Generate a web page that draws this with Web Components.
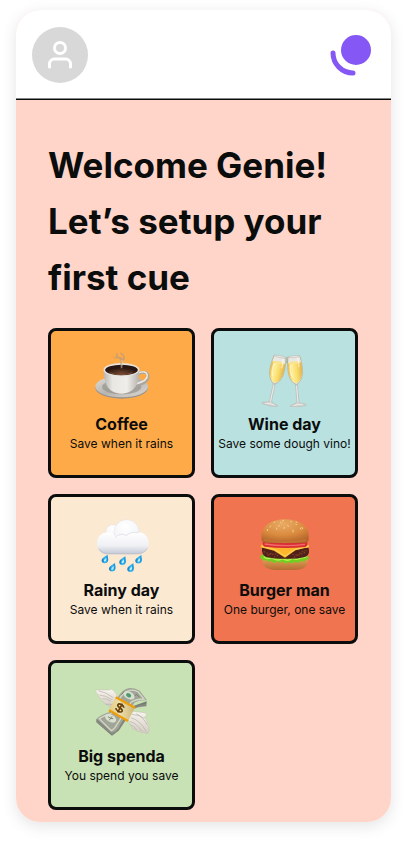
<!DOCTYPE html>
<html lang="en">
<head>
<meta charset="utf-8">
<meta name="viewport" content="width=device-width, initial-scale=1">
<title>Set up your first cue</title>
<style>
body { margin: 0; background: #fff; color: #0b0c0c; font-family: Inter, "Liberation Sans", sans-serif; }
</style>
</head>
<body>
<cue-screen>
  <cue-header slot="header"></cue-header>
  <h1 slot="title">Welcome Genie! Let’s setup your first cue</h1>
  <cue-card style="--fill:#ffaa48" icon="coffee"><span slot="name">Coffee</span><span slot="note">Save when it rains</span></cue-card>
  <cue-card style="--fill:#b9e1e0" icon="wine"><span slot="name">Wine day</span><span slot="note">Save some dough vino!</span></cue-card>
  <cue-card style="--fill:#fbe9d2" icon="rain"><span slot="name">Rainy day</span><span slot="note">Save when it rains</span></cue-card>
  <cue-card style="--fill:#f0744f" icon="burger"><span slot="name">Burger man</span><span slot="note">One burger, one save</span></cue-card>
  <cue-card style="--fill:#c9e2b5" icon="money"><span slot="name">Big spenda</span><span slot="note">You spend you save</span></cue-card>
</cue-screen>

<script>
const art = {
coffee: ['142 75 168 168', `
<defs>
<linearGradient id="cup" x1="0" x2="1"><stop offset="0" stop-color="#b9b7b2"/><stop offset=".25" stop-color="#e9e7e2"/><stop offset=".65" stop-color="#f0eeea"/><stop offset="1" stop-color="#b5b2ac"/></linearGradient>
<linearGradient id="dish" x1="0" x2="1" y2="1"><stop offset="0" stop-color="#e2dfd9"/><stop offset=".5" stop-color="#b8b5b0"/><stop offset="1" stop-color="#dddad5"/></linearGradient>
<radialGradient id="brew" cy=".8"><stop offset="0" stop-color="#74482f"/><stop offset="1" stop-color="#2a1713"/></radialGradient>
</defs>
<ellipse cx="225" cy="186" rx="79" ry="32" fill="#96928c"/>
<ellipse cx="225" cy="182" rx="79" ry="32" fill="url(#dish)"/>
<ellipse cx="225" cy="183" rx="59" ry="22" fill="#94908b" opacity=".65"/>
<path d="M274 143q26-10 30 5c3 16-15 26-38 31" fill="none" stroke="#aaa69f" stroke-width="8"/>
<path d="M274 141q25-9 28 6c2 14-15 22-35 27" fill="none" stroke="#eeece8" stroke-width="4"/>
<path d="M171 131c0 43 14 70 53 72 40-2 54-29 54-72z" fill="url(#cup)"/>
<ellipse cx="224.500" cy="131" rx="54" ry="20" fill="#e9e5df"/>
<ellipse cx="224.500" cy="132" rx="49" ry="16" fill="url(#brew)"/>
<path d="M190 140q32 13 67 0" fill="none" stroke="#9b6a4c" stroke-width="3" opacity=".5"/>
<path d="M224 119c-5-9 8-14-5-22-8-5-13-9-6-15m11 24c14-7 9-20-3-25m-18 15q16-7 29 7" fill="none" stroke="#b89a78" stroke-width="5" opacity=".65"/>
<path d="M225 127c-3-10 8-15 0-25" fill="none" stroke="#e4d5c4" stroke-width="5" opacity=".5"/>`],
wine: ['145 75 168 168', `
<defs><linearGradient id="gold" x1="0" x2="1"><stop offset="0" stop-color="#e6b84a"/><stop offset=".3" stop-color="#ffee93"/><stop offset=".65" stop-color="#f8da68"/><stop offset="1" stop-color="#dfb352"/></linearGradient>
<g id="flute">
<path d="M-3 81L-3 135Q-5 142-21 144Q-27 146-22 149Q0 153 22 149Q27 146 21 144Q5 142 3 135L3 81z" fill="#d3d2cf" stroke="#a4a19b"/>
<path d="M0 88v48m-14 10q14-4 28 0" fill="none" stroke="#f6f6f4" stroke-width="2"/>
<path d="M-18 0C-25 38-24 73 0 84C24 73 25 38 18 0z" fill="#e8e9e5" stroke="#b3a888" stroke-width="2"/>
<path d="M-20 18C-24 46-20 72 0 80C20 72 24 46 20 18z" fill="url(#gold)"/>
<ellipse cy="18" rx="19" ry="4" fill="#f8e394"/>
<ellipse rx="18" ry="3" fill="#e8e4df" stroke="#aaa69f"/>
<path d="M-12 22Q-17 46-10 62" fill="none" stroke="#fff8ce" stroke-width="5" opacity=".8"/>
<path d="M10 5q4 14 2 28" stroke="#fff" stroke-width="3" fill="none" opacity=".7"/>
</g></defs>
<g transform="translate(214 92) rotate(12)"><use href="#flute"/></g>
<g transform="translate(256 92) rotate(-5)"><use href="#flute"/></g>
<path d="M234 92l-1 20 4 0-1-20z" fill="#98866b" opacity=".6"/>`],
rain: ['142 75 168 168', `
<defs><radialGradient id="cloud" cx=".45" cy=".25" r=".75"><stop offset="0" stop-color="#fff"/><stop offset=".65" stop-color="#f5f6f9"/><stop offset="1" stop-color="#dde0e8"/></radialGradient>
<linearGradient id="base" x2="0" y2="1"><stop offset="0" stop-color="#fff"/><stop offset=".6" stop-color="#f0f1f5"/><stop offset="1" stop-color="#c3c8d4"/></linearGradient>
<linearGradient id="water" x1="0" x2="1"><stop offset="0" stop-color="#1471b8"/><stop offset=".5" stop-color="#35baf3"/><stop offset="1" stop-color="#178bd0"/></linearGradient>
<g id="drop"><path d="M8-14C-2-8-11-3-10 5C-8 14 6 14 9 5C11-1 8-7 8-14z" fill="url(#water)"/><path d="M4-5C-2 0-4 3-3 6q5 2 7-4z" fill="#b7f2ff"/></g></defs>
<circle cx="199" cy="120" r="22" fill="url(#cloud)" stroke="#d9dce5"/>
<circle cx="240" cy="121" r="38" fill="url(#cloud)" stroke="#d9dce5"/>
<path d="M180 121c-18 2-29 15-29 34 0 21 15 32 34 32h87c20 0 34-13 34-34 0-18-12-30-28-32-14-3-30 1-38 10-12-7-29-5-33 4-5-9-13-15-27-14z" fill="url(#base)"/>
<path d="M207 138c4-11 21-15 33-6m0-2c9-8 24-11 37-7" fill="none" stroke="#d5d8e1" stroke-width="2"/>
<path d="M157 171q10 14 30 14h84q22 0 31-16" fill="none" stroke="#b5bac8" stroke-width="3" opacity=".6"/>
<use href="#drop" x="175" y="202"/><use href="#drop" x="228" y="207"/><use href="#drop" x="276" y="203"/><use href="#drop" x="197" y="227"/><use href="#drop" x="252" y="228"/>`],
burger: ['145 75 168 168', `
<defs><radialGradient id="bun" cx=".45" cy=".2" r=".8"><stop offset="0" stop-color="#e9ab64"/><stop offset=".6" stop-color="#d98a3e"/><stop offset="1" stop-color="#b5652b"/></radialGradient>
<linearGradient id="heel" x2="0" y2="1"><stop offset="0" stop-color="#e5a45b"/><stop offset="1" stop-color="#b66c32"/></linearGradient></defs>
<path d="M161 196h137c4 27-13 38-40 38h-58c-27 0-42-13-39-38z" fill="url(#heel)"/>
<path d="M158 188q-8 11 2 13 5 8 13 2 7 10 15 3 8 12 19 2 8 8 16 1 10 10 19 1 9 9 18-1 10 7 16-2 10 5 15-4 11 2 10-9z" fill="#72ce20"/>
<path d="M165 194q12 9 23 3 18 12 34 3 16 10 30-1 13 7 25-2 11 2 18-5" fill="none" stroke="#baf052" stroke-width="4"/>
<path d="M160 168h140q5 25-14 28-29 6-56 4-32 2-58-5-14-7-12-27z" fill="#4f2119"/>
<path d="M165 178q22 14 41 6m45 3q24 6 44-11M177 190l11-6m68 12l13-8m-73 7l16-6m60-5l18-9" fill="none" stroke="#84432b" stroke-width="4" stroke-dasharray="4 5"/>
<path d="M163 157h132q7 1 6 8l-41 10-31 22-33-21-40-10q-1-8 7-9z" fill="#ffb52c"/>
<path d="M160 163l39 10 30 19 29-19 42-11" fill="none" stroke="#ffcf4d" stroke-width="4"/>
<path d="M164 147h130q7 14-4 18-62 6-122-1-10-5-4-17z" fill="#d72f36"/>
<path d="M168 156q61 9 121 1" fill="none" stroke="#f56a66" stroke-width="4"/>
<path d="M159 144c-5-44 29-62 70-62s77 18 71 62c-2 10-18 9-27 9h-88c-13 0-25 0-26-9z" fill="url(#bun)"/>
<path d="M165 144q64 14 127 0" fill="none" stroke="#c97c38" stroke-width="5" opacity=".65"/>
<g stroke="#f6cf91" stroke-width="3" stroke-linecap="round"><path d="M196 92l3-3m22-2l4-2m21 3l3 2M184 105l2-3m23 1l3-2m25-1l2 3m22-7l3 2M177 112l-1 4m27-8l2 4m22-6l-1 4m27 4v6m22-12l2 4M215 90l3 3m45-4l2 3m15 14l2 4"/></g>`],
money: ['142 75 168 168', `
<defs><linearGradient id="wing" x2="0" y2="1"><stop offset="0" stop-color="#f8f5ef"/><stop offset="1" stop-color="#d2cbc1"/></linearGradient>
<linearGradient id="band" x1="0" x2="1"><stop offset="0" stop-color="#e5c978"/><stop offset=".4" stop-color="#ecdfae"/><stop offset="1" stop-color="#cdb676"/></linearGradient></defs>
<path d="M148 95q-2 10 7 15-1 8 7 10 0 8 8 11 2 9 12 9 6 9 18 8l13-31q-5-15-18-23-8 3-17 2-10 0-30-1z" fill="url(#wing)" stroke="#b6afa5"/>
<path d="M155 98q22 4 45 21m-41-8q16 1 38 14m-29-3q13-1 25 8m-15 9q12-2 20 2" fill="none" stroke="#b5aea6" stroke-width="2"/>
<path d="M248 163q6-5 20-2l25 3q9 3 6 9-2 5-7 5 10 5 10 15 8 6 4 12 3 13-2 21-7 3-12-4-8 6-13-2-9 4-13-4-9 0-10-9-8-4-7-12-8-8-1-32z" fill="url(#wing)" stroke="#b6afa5"/>
<path d="M256 169q23 2 35 11m-38-1q29 9 45 41m-48-30q22 7 35 30m-34-20q14 4 19 16m-1-49q21 10 33 34" fill="none" stroke="#b5aea6" stroke-width="2"/>
<path d="M149 184v9l47 40 20-15 43-65q18-9 40-8l1-15z" fill="#777b72"/>
<path d="M150 188l47 39 17-13 48-68 37-7M150 191l47 38 19-12 47-67 36-7" fill="none" stroke="#a9ada1" stroke-width="1"/>
<path d="M149 183q15-14 38-20l24-42q16-27 34-30 18-3 34 7l22 29q-22-2-38 7l-42 66q-8 19-25 24z" fill="#a1a597"/>
<path d="M158 182q19-12 34-14l24-42q16-27 34-29 13-2 25 5l17 21q-23 0-38 9l-43 67q-6 14-17 19z" fill="none" stroke="#d4d7c6" stroke-width="4"/>
<ellipse cx="247" cy="112" rx="18" ry="11" transform="rotate(28 247 112)" fill="#d9decb"/>
<ellipse cx="246" cy="112" rx="8" ry="6" transform="rotate(28 246 112)" fill="#4c9974"/>
<ellipse cx="192" cy="181" rx="18" ry="11" transform="rotate(28 192 181)" fill="#dbdfcf"/>
<path d="M184 176q8 7 16 6m-12 5l8-12m36-75l-7 10m44-1l10 9m-9-11l-4 7" fill="none" stroke="#7f8877" stroke-width="3"/>
<path d="M207 118l58 31-21 40-57-32z" fill="url(#band)"/>
<path d="M207 118l58 31M187 157l57 32" stroke="#ef9e0b" stroke-width="7"/>
<path transform="translate(220 150) rotate(28)" d="M10-6C6-13-10-13-10-5C-10 3 10-3 10 5C10 13-7 13-11 6M0-15V15" fill="none" stroke="#68400b" stroke-width="5"/>`]
};

customElements.define('cue-screen', class extends HTMLElement {
  constructor() {
    super();
    this.attachShadow({mode: 'open'}).innerHTML = `
<style>
:host { display: block; padding: 10px 16px 22px; }
main { overflow: hidden; border-radius: 24px; background: #ffd5c9; }
.frame { border-radius: 24px; box-shadow: 0 4px 16px rgba(0,0,0,.11); }
section { padding: 37px 33px 12px 32px; }
::slotted(h1) { margin: 0 0 23px; font-size: 35px; line-height: 56px; font-weight: 700; }
.grid { display: grid; grid-template-columns: repeat(2, minmax(0, 1fr)); gap: 16px; }
</style>
<div class="frame"><main><slot name="header"></slot><section><slot name="title"></slot><div class="grid"><slot></slot></div></section></main></div>`;
  }
});

customElements.define('cue-header', class extends HTMLElement {
  constructor() {
    super();
    this.attachShadow({mode: 'open'}).innerHTML = `
<style>
:host { display: block; }
header { display: flex; justify-content: space-between; align-items: center; padding: 17px 20px 16px 16px; background: #fff; border-bottom: 1px solid #0b0c0c; box-shadow: inset 0 -1px #858585; }
button { display: block; width: 56px; height: 56px; padding: 0; border: 0; border-radius: 50%; background: #d8d8d8; cursor: pointer; }
svg { display: block; }
</style>
<header>
<button aria-label="Profile"><svg width="56" height="56" viewBox="0 0 56 56" fill="none" stroke="#fff" stroke-width="3" stroke-linecap="round"><circle cx="28" cy="21" r="5.500"/><path d="M17.500 40v-3a5 5 0 0 1 5-5h11a5 5 0 0 1 5 5v3"/></svg></button>
<svg width="41" height="41" viewBox="330 35 41 41" role="img" aria-label="Cue"><circle cx="356" cy="50" r="15" fill="#8557f5"/><path d="M333 53C333 64 342 73 353 73" fill="none" stroke="#8557f5" stroke-width="5" stroke-linecap="round"/></svg>
</header>`;
  }
});

customElements.define('cue-card', class extends HTMLElement {
  constructor() {
    super();
    const [box, shapes] = art[this.getAttribute('icon')];
    this.attachShadow({mode: 'open'}).innerHTML = `
<style>
:host { display: block; }
button { display: flex; flex-direction: column; align-items: center; width: 100%; min-height: 150px; padding: 20px 0 23px; border: 3px solid #0b0c0c; border-radius: 8px; background: var(--fill); color: inherit; font: inherit; cursor: pointer; }
svg { display: block; width: 56px; height: 56px; margin-bottom: 5px; }
.name { font-size: 16px; line-height: 24px; font-weight: 700; }
.note { font-size: 12px; line-height: 16px; white-space: nowrap; }
</style>
<button><svg viewBox="${box}" aria-hidden="true">${shapes}</svg><span class="name"><slot name="name"></slot></span><span class="note"><slot name="note"></slot></span></button>`;
  }
});
</script>
</body>
</html>
